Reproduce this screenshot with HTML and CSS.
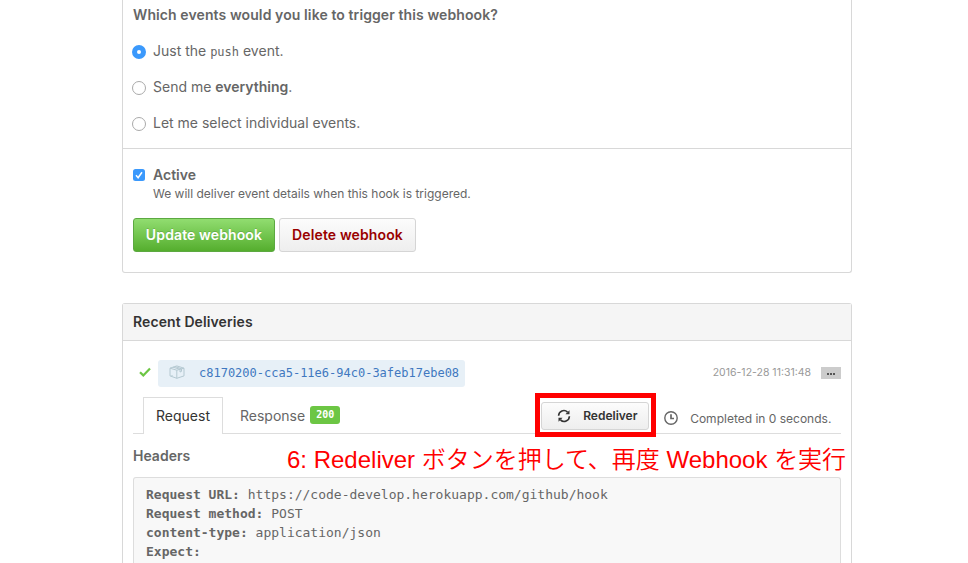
FILE: index.html
```
<!DOCTYPE html>
<html lang="ja">
<head>
<meta charset="utf-8">
<title>Webhook settings</title>
<link rel="stylesheet" href="styles.css">
</head>
<body>
<main class="page">
  <section class="box settings">
    <div class="events">
      <p class="question"><span>Which events would you like to trigger this webhook?</span></p>
      <div class="choice"><i class="radio on"></i><span class="c1">Just the <code>push</code> event.</span></div>
      <div class="choice"><i class="radio"></i><span class="c2">Send me <b>everything</b>.</span></div>
      <div class="choice"><i class="radio"></i><span class="c3">Let me select individual events.</span></div>
    </div>
    <div class="activation">
      <div class="active-row">
        <svg class="checkbox" viewBox="0 0 12 12"><rect width="12" height="12" rx="2.5" fill="#3b99fc"/><path d="M3 6.3 5.1 8.7 9 3.2" fill="none" stroke="#fff" stroke-width="1.5"/></svg>
        <b>Active</b>
      </div>
      <p class="note"><span>We will deliver event details when this hook is triggered.</span></p>
      <div class="buttons">
        <button class="btn primary"><span>Update webhook</span></button>
        <button class="btn danger"><span>Delete webhook</span></button>
      </div>
    </div>
  </section>

  <section class="box deliveries">
    <h3 class="box-header"><span>Recent Deliveries</span></h3>
    <div class="delivery">
      <div class="summary">
        <svg class="check" viewBox="0 0 12 10"><path d="M1 5.2 4.3 8.4 11 1.4" fill="none" stroke="#6cc644" stroke-width="2.2"/></svg>
        <a class="guid">
          <svg class="package" viewBox="0 0 16 14"><path d="M1 3.2 7.8 5.2 15 3.2V10.9L7.8 13.3 1 10.9ZM1 3.2 7.8.9 15 3.2M7.8 5.2V13.3M4 2.2 11 4.3V7L12.5 6.4V3.8L6 1.5M3 10V11" fill="none" stroke="#b4c8d1" stroke-width="1"/></svg>
          <code>c8170200-cca5-11e6-94c0-3afeb17ebe08</code>
        </a>
        <time>2016-12-28 11:31:48</time>
        <span class="more"><i></i><i></i><i></i></span>
      </div>
      <div class="tabs">
        <a class="tab selected"><span>Request</span></a>
        <a class="tab response"><span>Response</span><em>200</em></a>
        <div class="highlight">
          <button class="redeliver">
            <svg viewBox="0 0 14 14"><path d="M1.6 6.7A5.2 5.2 0 0 1 10.5 3.1M12.4 7.3A5.2 5.2 0 0 1 3.5 10.9" fill="none" stroke="#333" stroke-width="1.6"/><path d="M12.5 1.2V5.3H8.4ZM1.5 12.8V8.7H5.6Z" fill="#333"/></svg>
            <span>Redeliver</span>
          </button>
        </div>
        <svg class="clock" viewBox="0 0 14 14"><circle cx="7" cy="7" r="6.2" fill="none" stroke="#666" stroke-width="1.4"/><path d="M7 3.3V7.5H10" fill="none" stroke="#666" stroke-width="1.7"/></svg>
        <span class="completed">Completed in 0 seconds.</span>
      </div>
      <div class="headers-title">
        <h4>Headers</h4>
        <p class="annotation"><span class="a1">6: Redeliver </span><span class="jp j1">ボタンを押して、再度</span><span class="a2"> Webhook </span><span class="jp">を実行</span></p>
      </div>
      <pre class="headers"><b>Request URL:</b> https://code-develop.herokuapp.com/github/hook
<b>Request method:</b> POST
<b>content-type:</b> application/json
<b>Expect:</b> </pre>
    </div>
  </section>
</main>
</body>
</html>
```
FILE: styles.css
```
* { box-sizing: border-box; }
html, body { height: 563px; overflow: hidden; }
body { margin: 0; background: #fff; color: #666; font: 14px/20px Inter, "Noto Sans CJK JP", sans-serif; }
p, h3, h4, pre { margin: 0; }
b { font-weight: 600; }
code, pre { font-family: "DejaVu Sans Mono", monospace; }
.page { width: 730px; margin-left: 122px; }
.box { border: 1px solid #d8d8d8; border-radius: 3px; }
.settings { height: 273px; border-top: 0; border-radius: 0 0 3px 3px; }
.events { height: 149px; padding: 5px 9px 0; border-bottom: 1px solid #d8d8d8; }
.question { padding-left: 1px; font-weight: 600; letter-spacing: .1px; }
.choice { display: flex; align-items: center; gap: 7px; margin-top: 16px; height: 20px; white-space: pre; }
.choice code { font-size: 12px; }
.radio { width: 14px; height: 14px; margin-top: 2px; border: 1px solid #aaa; border-radius: 50%; background: #fff; }
.radio.on { border: 5px solid #3b99fc; }
.activation { padding: 16px 10px 0; }
.active-row { display: flex; align-items: center; gap: 8px; }
.checkbox { width: 12px; height: 12px; }
.note { padding-left: 20px; font-size: 12px; line-height: 18px; }
.buttons { display: flex; gap: 4px; margin-top: 15px; }
.btn { height: 34px; padding: 0; border: 1px solid #d5d5d5; border-radius: 3px; font: 600 14px/20px Inter, sans-serif; letter-spacing: .12px; white-space: nowrap; }
.primary { width: 142px; color: #fff; border-color: #5ca941; background: linear-gradient(#91dd70, #55ae2e); text-shadow: 0 -1px 0 rgba(0,0,0,.15); }
.danger { width: 137px; color: #900; background: linear-gradient(#fcfcfc, #eee); }
.deliveries { height: 260px; margin-top: 30px; border-bottom: 0; border-radius: 3px 3px 0 0; }
.box-header { height: 37px; padding: 8px 10px; border-bottom: 1px solid #d8d8d8; background: #f5f5f5; color: #333; font-size: 14px; font-weight: 600; line-height: 20px; letter-spacing: .1px; }
.delivery { padding: 19px 10px 0; }
.summary { display: flex; align-items: center; height: 27px; }
.check { width: 12px; height: 10px; margin: -3px 7px 0 6px; }
.guid { display: flex; align-items: center; width: 307px; height: 27px; padding-left: 11px; border-radius: 3px; background: #e7f0f7; color: #4078c0; font-size: 12px; }
.package { width: 16px; height: 14px; margin: -3px 14px 0 0; }
.guid code { margin-top: -2px; }
time { margin: -1px 0 0 auto; color: #999; font-size: 10.5px; }
.more { display: flex; align-items: flex-end; justify-content: center; gap: 1px; width: 20px; height: 12px; margin: -1px 0 0 10px; padding-bottom: 4px; background: #ccc; }
.more i { width: 2px; height: 2px; background: #555; }
.tabs { display: flex; align-items: center; height: 47px; padding-left: 10px; border-bottom: 1px solid #ddd; white-space: nowrap; }
.tab { display: flex; align-items: center; height: 37px; margin-top: 12px; }
.selected { justify-content: center; width: 80px; height: 37px; margin-top: 11px; border: 1px solid #ddd; border-bottom: 0; background: #fff; color: #333; }
.response { margin-left: 17px; }
.response em { width: 30px; height: 18px; margin: 0 0 2px 5px; border-radius: 3px; background: #6cc644; color: #fff; font: bold 10px/18px "DejaVu Sans Mono", monospace; text-align: center; }
.highlight { width: 121px; height: 44px; margin: 5px 0 -4px 195px; border: 5px solid #f00; padding: 4px 5px 2px 1px; background: #fff; }
.redeliver { display: flex; align-items: center; width: 108px; height: 28px; padding: 0 0 0 15px; border: 1px solid #d5d5d5; border-radius: 3px; background: linear-gradient(#fcfcfc, #eee); color: #333; font: 600 12px/18px Inter, sans-serif; }
.redeliver svg { width: 14px; height: 14px; margin-right: 12px; }
.clock { width: 14px; height: 14px; margin: 16px 12px 0 8px; }
.completed { margin-top: 18px; font-size: 12px; }
.headers-title { display: flex; height: 43px; padding-top: 9px; }
h4 { flex: none; width: 154px; padding-top: 3px; font-size: 14px; line-height: 20px; font-weight: 600; }
.annotation { flex: none; color: #f00; font: 24px/32px "Liberation Sans", sans-serif; white-space: pre; margin-top: -1px; }
.jp { font-family: "Noto Sans CJK JP", sans-serif; font-weight: 350; }
.headers { height: 86px; padding: 7px 12px 0; border: 1px solid #ddd; border-bottom: 0; border-radius: 3px 3px 0 0; background: #f8f8f8; font-size: 13px; line-height: 19px; }
.headers b { font-weight: 700; }
```
